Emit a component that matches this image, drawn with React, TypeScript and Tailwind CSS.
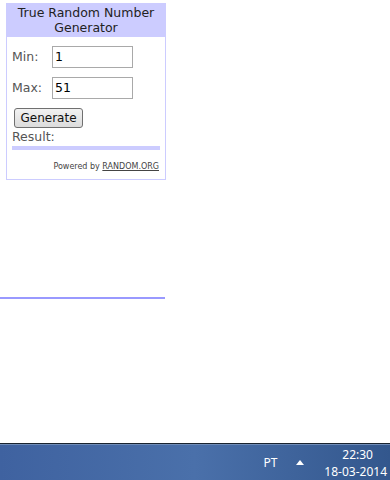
export default function App() {
  return (
    <div className="relative h-[480px] w-[390px] overflow-hidden bg-white font-['DejaVu_Sans',sans-serif]">
      <div className="pt-[3px] pl-[6px]">
        <div className="w-[160px] border border-[#ccccff] bg-white">
          <div className="bg-[#ccccff] pt-[1px] pb-[2px] text-center text-[12.5px] leading-[15px] text-[#222]">
            True Random Number
            <br />
            Generator
          </div>
          <div className="px-[5px] pt-[9px] text-[12.5px] text-[#555]">
            <div className="flex items-center">
              <span className="w-[40px]">Min:</span>
              <div className="h-[22px] w-[81px] border border-[#a9a9a9] pl-[2px] text-[12.5px] leading-[20px] text-black">1</div>
            </div>
            <div className="mt-[9px] flex items-center">
              <span className="w-[40px]">Max:</span>
              <div className="h-[22px] w-[81px] border border-[#a9a9a9] pl-[2px] text-[12.5px] leading-[20px] text-black">51</div>
            </div>
            <div className="mt-[9px] pl-[2px]">
              <div className="flex h-[20px] w-[69px] items-center justify-center rounded-[3px] border border-[#707070] bg-gradient-to-b from-[#f2f2f2] to-[#dcdcdc] text-[12px] text-[#111]">
                Generate
              </div>
            </div>
            <div className="mt-[1px] leading-[15px]">Result:</div>
            <div className="mt-[2px] h-[4px] w-[148px] bg-[#ccccff]" />
            <div className="mt-[11px] pb-[6px] pr-[1px] text-right text-[8px] text-[#444]">
              Powered by <span className="underline">RANDOM.ORG</span>
            </div>
          </div>
        </div>
      </div>
      <div className="mt-[117px] h-[2px] w-[165px] bg-[#9999ff]" />
      <div className="absolute bottom-0 left-0 h-[37px] w-[390px] border-t border-[#1a2430] bg-gradient-to-r from-[#3f62a0] via-[#4a70aa] to-[#33578d] font-['Noto_Sans',sans-serif] text-white">
        <div className="h-[1px] bg-[#6f8cb8]" />
        <div className="flex h-[35px] items-center justify-end pr-[3px]">
          <span className="mr-[19px] text-[12px]">PT</span>
          <svg width="8" height="5" viewBox="0 0 8 5" className="mr-[20px]">
            <path d="M0 5 L4 0 L8 5 Z" fill="#fff" />
          </svg>
          <div className="flex flex-col items-end text-[12px] leading-[17px]">
            <span className="mr-[14px]">22:30</span>
            <span>18-03-2014</span>
          </div>
        </div>
      </div>
    </div>
  );
}
